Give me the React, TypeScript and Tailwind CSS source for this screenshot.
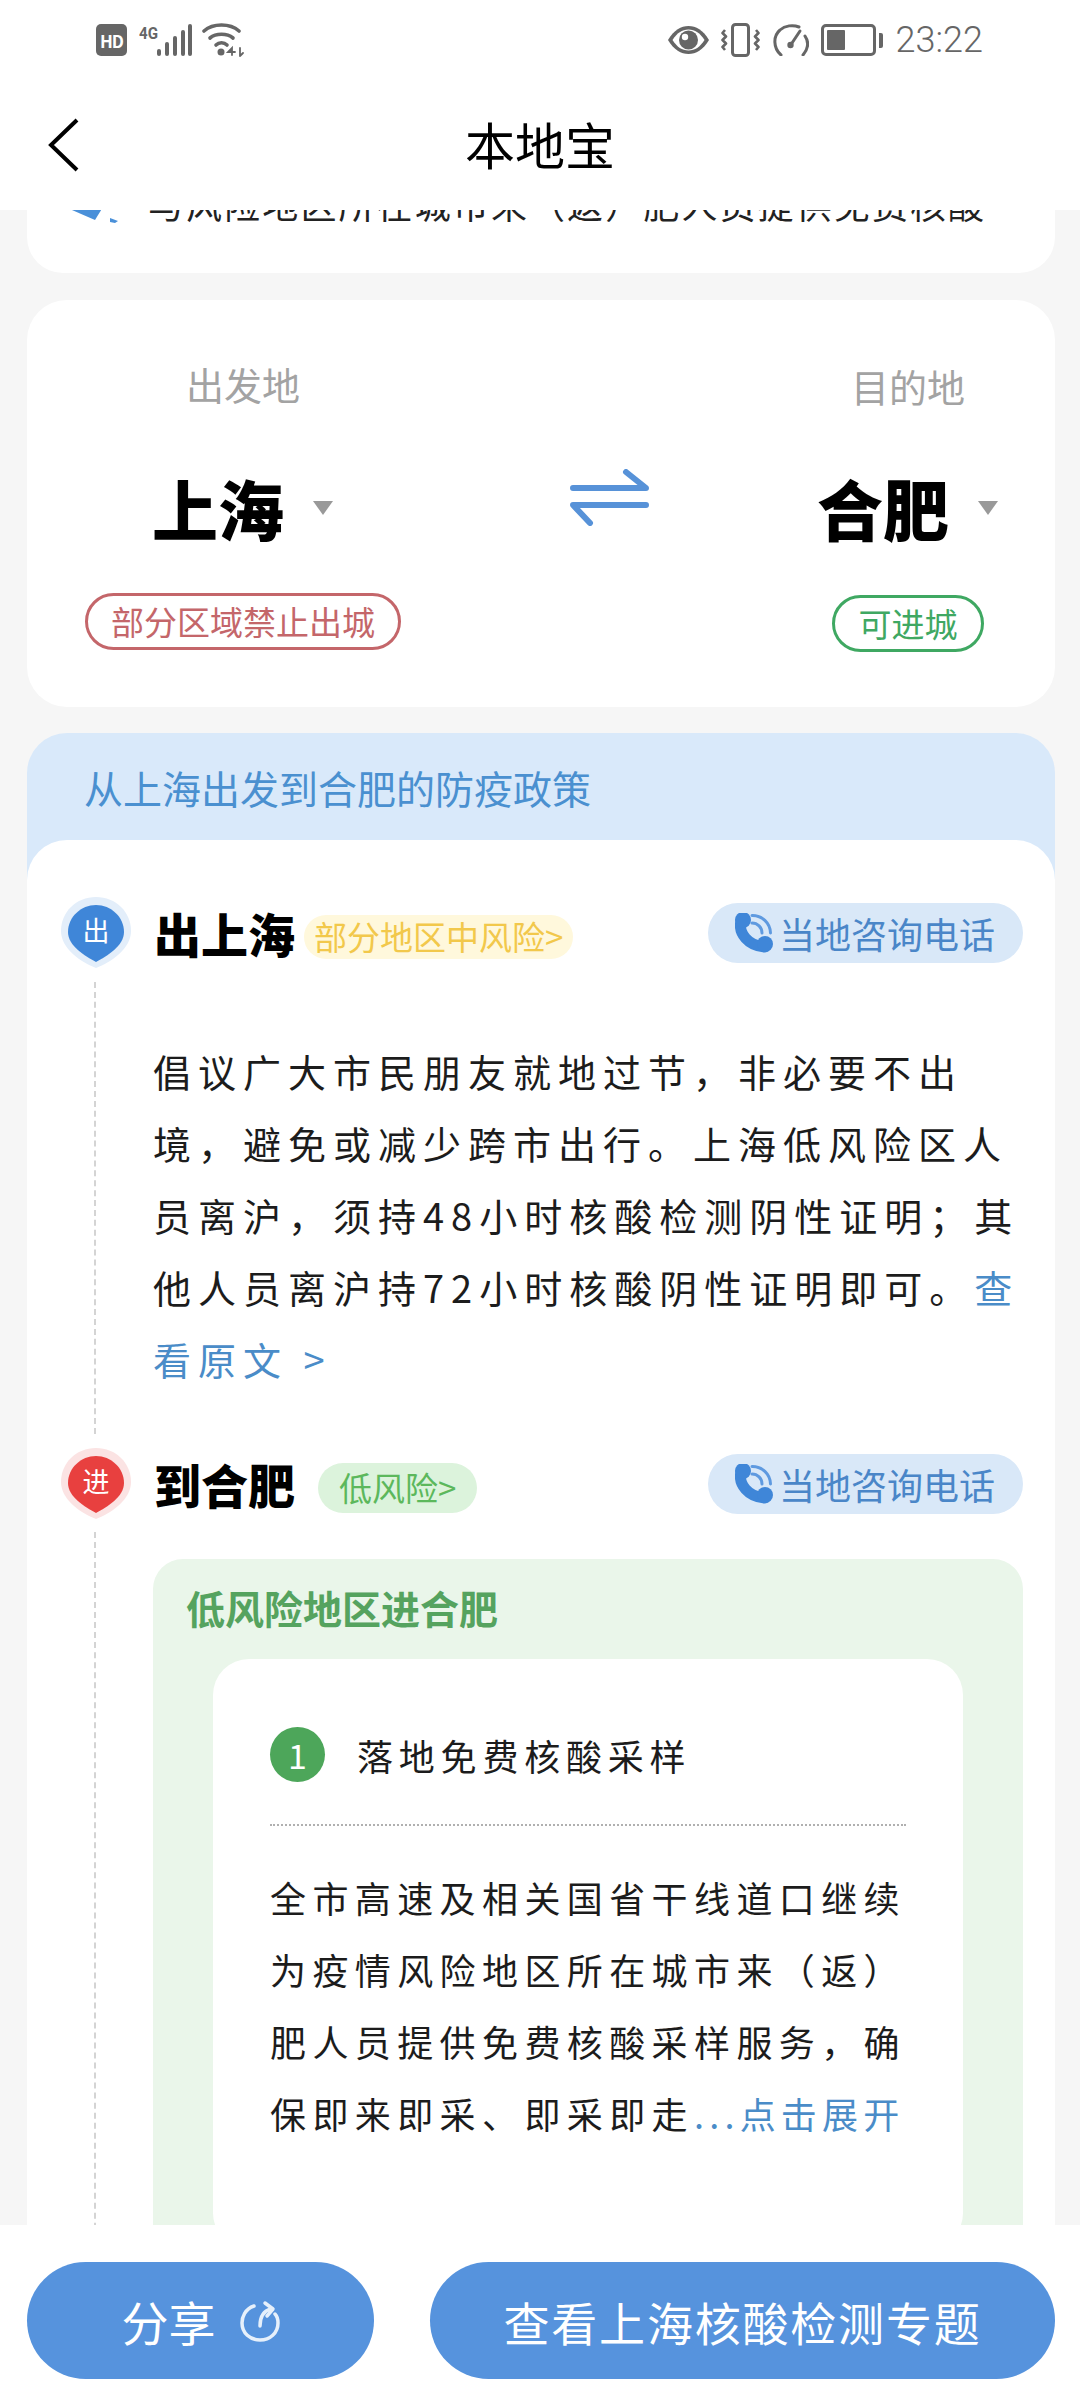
const PhoneIcon = () => (
  <svg width="38" height="40" viewBox="0 0 38 40" fill="none" className="shrink-0">
    <path d="M6 8 C3 20 13 33 30 34" stroke="#3f86d8" strokeWidth="11" strokeLinecap="round" />
    <circle cx="8" cy="7" r="8" fill="#3f86d8" />
    <circle cx="30" cy="31" r="8" fill="#3f86d8" />
    <path d="M17 2.5 A18 18 0 0 1 35.5 20" stroke="#5f9ae0" strokeWidth="3" strokeLinecap="round" />
    <path d="M17 10 A10 10 0 0 1 27 20" stroke="#5f9ae0" strokeWidth="3" strokeLinecap="round" />
  </svg>
);

function Pin({ label, color, halo }: { label: string; color: string; halo: string }) {
  return (
    <div className="relative h-[71px] w-[70px] shrink-0">
      <svg width="70" height="71" viewBox="0 0 70 71">
        <path d="M35 0 C55 0 70 15 70 34 C70 52 50 65 35 71 C20 65 0 52 0 34 C0 15 15 0 35 0Z" fill={halo} />
        <path d="M35 8 C50 8 63 20 63 35 C63 49 46 59 35 65 C24 59 7 49 7 35 C7 20 20 8 35 8Z" fill={color} />
      </svg>
      <span className="absolute inset-x-0 top-[16px] text-center text-[27px] leading-[34px] text-white">{label}</span>
    </div>
  );
}

const PhonePill = () => (
  <div className="ml-auto flex h-[60px] w-[315px] shrink-0 items-center gap-[6px] rounded-full bg-[#d9e8f8] pl-[27px] text-[36px] leading-none text-[#4a86c8]">
    <PhoneIcon />
    <span className="whitespace-nowrap">当地咨询电话</span>
  </div>
);

function Triangle() {
  return (
    <svg width="22" height="15" viewBox="0 0 22 15" className="shrink-0">
      <path d="M1 1 H21 L11 15Z" fill="#999999" />
    </svg>
  );
}

function StatusBar() {
  return (
    <div className="flex h-[80px] items-center justify-between pl-[96px] pr-[97px]">
      <div className="flex items-center">
        <div className="flex h-[32px] w-[31px] items-center justify-center rounded-[5px] bg-[#666666] text-[17px] font-bold leading-none tracking-[-1px] text-white">
          HD
        </div>
        <svg width="53" height="34" viewBox="0 0 53 34" className="ml-[12px]" fill="#666666">
          <text x="0" y="16" fontSize="16" fontWeight="700" textLength="19" lengthAdjust="spacingAndGlyphs" fontFamily="Roboto, sans-serif">
            4G
          </text>
          <rect x="18" y="26" width="4" height="7" rx="2" />
          <rect x="26" y="19" width="4" height="14" rx="2" />
          <rect x="34" y="13" width="4" height="20" rx="2" />
          <rect x="42" y="7" width="4" height="26" rx="2" />
          <rect x="49" y="1" width="4" height="32" rx="2" />
        </svg>
        <svg width="42" height="34" viewBox="0 0 42 34" className="ml-[10px]" fill="none" stroke="#666666" strokeWidth="3.6" strokeLinecap="round">
          <path d="M2 8 C11 0 28 0 37 8" />
          <path d="M8 15 C14 10 25 10 31 15" />
          <path d="M14 22 C17 19 22 19 25 22" />
          <circle cx="19" cy="29" r="3.5" fill="#666666" stroke="none" />
          <path d="M30 32 V25 L26 29 H33 M38 25 V33 M38 33 L41 30" strokeWidth="1.8" />
        </svg>
      </div>
      <div className="flex items-center text-[#666666]">
        <svg width="41" height="28" viewBox="0 0 41 28">
          <path d="M0 14 C6 4 13 0 20.5 0 C28 0 35 4 41 14 C35 24 28 28 20.5 28 C13 28 6 24 0 14Z" fill="#666666" />
          <path d="M4.5 14 C9 7 14 3.5 20.5 3.5 C27 3.5 32 7 36.5 14 C32 21 27 24.5 20.5 24.5 C14 24.5 9 21 4.5 14Z" fill="#ffffff" />
          <circle cx="20.5" cy="14" r="9.5" fill="#666666" />
          <circle cx="17" cy="11" r="3.2" fill="#ffffff" />
        </svg>
        <svg width="39" height="34" viewBox="0 0 39 34" className="ml-[12px]" fill="none" stroke="#666666" strokeWidth="2.6">
          <rect x="11.5" y="1.5" width="16" height="31" rx="3" strokeWidth="3" />
          <path d="M4 7 L1.5 10 L5 13.5 L1.5 17 L5 20.5 L1.5 24 L4 27" strokeLinejoin="round" />
          <path d="M35 7 L37.5 10 L34 13.5 L37.5 17 L34 20.5 L37.5 24 L35 27" strokeLinejoin="round" />
        </svg>
        <svg width="36" height="32" viewBox="0 0 36 32" className="ml-[13px]" fill="none" stroke="#666666" strokeWidth="3">
          <path d="M8 31 C0 24 0 12 7 6 C12 1.5 20 0.5 26 3" strokeLinecap="round" />
          <path d="M32 12 C36 18 35 25 30 31" strokeLinecap="round" />
          <path d="M27 7 L19 19" strokeWidth="3" strokeLinecap="round" />
          <circle cx="17.5" cy="21" r="3.2" fill="#666666" stroke="none" />
        </svg>
        <div className="ml-[12px] flex h-[32px] w-[55px] rounded-[5px] border-[3px] border-[#666666] p-[3px]">
          <div className="w-[18px] rounded-[1px] bg-[#666666]" />
        </div>
        <div className="ml-[3px] h-[15px] w-[4px] rounded-r-[2px] bg-[#666666]" />
        <span className="ml-[13px] font-['Roboto',sans-serif] text-[36px] font-light leading-none">23:22</span>
      </div>
    </div>
  );
}

function RouteCard() {
  return (
    <div className="mt-[27px] flex h-[407px] shrink-0 justify-between rounded-[40px] bg-white pl-[58px] pr-[56px] pt-[59px]">
      <div className="flex w-[316px] flex-col items-center">
        <span className="text-[38px] leading-[50px] text-[#a3a3a3]">出发地</span>
        <div className="mt-[58px] flex h-[80px] items-center gap-[28px]">
          <span className="whitespace-nowrap text-[66px] font-black leading-[80px] text-black">上海</span>
          <Triangle />
        </div>
        <div className="mt-[46px] flex h-[57px] w-full items-center justify-center rounded-full border-[3px] border-[#c4666a] text-[33px] leading-none text-[#c4666a]">
          部分区域禁止出城
        </div>
      </div>
      <svg width="79" height="57" viewBox="0 0 79 57" className="mt-[110px] shrink-0" fill="none" stroke="#5792d8" strokeWidth="6" strokeLinecap="round" strokeLinejoin="round">
        <path d="M3 19 H76 L56 3" />
        <path d="M76 36 H3 L20 54" />
      </svg>
      <div className="flex w-[182px] flex-col items-center">
        <span className="mt-[2px] text-[38px] leading-[50px] text-[#a3a3a3]">目的地</span>
        <div className="mt-[56px] flex h-[80px] items-center gap-[28px]">
          <span className="whitespace-nowrap text-[66px] font-black leading-[80px] text-black">合肥</span>
          <Triangle />
        </div>
        <div className="mt-[48px] flex h-[57px] w-[152px] items-center justify-center rounded-full border-[3px] border-[#3fa862] text-[33px] leading-none text-[#3fa862]">
          可进城
        </div>
      </div>
    </div>
  );
}

function SectionHead({ pin, title, children }: { pin: React.ReactNode; title: string; children: React.ReactNode }) {
  return (
    <div className="flex items-center pl-[34px] pr-[32px]">
      {pin}
      <span className="ml-[23px] text-[47px] font-black leading-none text-black">{title}</span>
      {children}
      <PhonePill />
    </div>
  );
}

export default function App() {
  return (
    <div className="flex h-[2400px] w-[1080px] flex-col overflow-hidden bg-[#f6f6f6] font-['Noto_Sans_CJK_SC',sans-serif]">
      <header className="h-[210px] shrink-0 bg-white">
        <StatusBar />
        <div className="grid h-[130px] grid-cols-[1fr_auto_1fr] items-center">
          <svg width="32" height="54" viewBox="0 0 32 54" className="ml-[48px]" fill="none" stroke="#000000" strokeWidth="4">
            <path d="M29 2 L3 27 L29 52" />
          </svg>
          <span className="-mt-[5px] text-[50px] leading-none text-black">本地宝</span>
        </div>
      </header>

      <main className="flex min-h-0 flex-1 flex-col overflow-hidden pl-[27px] pr-[25px]">
        <div className="h-[63px] shrink-0 overflow-hidden rounded-b-[36px] bg-white">
          <div className="-mt-[25px] flex h-[36px] items-center pl-[38px]">
            <svg width="53" height="36" viewBox="0 0 53 36" className="shrink-0 translate-y-[2px]" fill="#4a90d9">
              <path d="M0 20 H38 L30 33Z" />
              <path d="M45 31 L53 34 L50 36 L45 35Z" />
            </svg>
            <span className="ml-[30px] whitespace-nowrap text-[36px] leading-none tracking-[2.1px] text-[#222222]">
              与风险地区所在城市来（返）肥人员提供免费核酸
            </span>
          </div>
        </div>

        <RouteCard />

        <section className="mt-[26px] flex min-h-0 flex-1 flex-col rounded-t-[40px] bg-[#d9e9fa]">
          <div className="flex h-[107px] shrink-0 items-center pl-[57px] pt-[1px] text-[39px] leading-none text-[#4a90d0]">
            从上海出发到合肥的防疫政策
          </div>
          <div className="min-h-0 flex-1 overflow-hidden rounded-t-[40px] bg-white pt-[57px]">
            <SectionHead pin={<Pin label="出" color="#3f86d8" halo="#e3eefa" />} title="出上海">
              <span className="ml-[9px] mt-[8px] flex h-[44px] items-center rounded-full bg-[#fff8dc] px-[10px] text-[33px] leading-none text-[#f2c84b]">
                部分地区中风险&gt;
              </span>
            </SectionHead>
            <div className="ml-[67px] mt-[14px] flex border-l-2 border-dashed border-[#d4d4d4] pb-[39px] pl-[57px] pr-[32px] pt-[53px]">
              <p className="text-[38px] leading-[72px] tracking-[7px] text-[#1c1c1c]">
                倡议广大市民朋友就地过节，非必要不出境，避免或减少跨市出行。上海低风险区人员离沪，须持48小时核酸检测阴性证明；其他人员离沪持72小时核酸阴性证明即可。
                <span className="text-[#4a8cc8]">查看原文 &gt;</span>
              </p>
            </div>
            <div className="mt-[14px]">
              <SectionHead pin={<Pin label="进" color="#e8403f" halo="#fbe3e3" />} title="到合肥">
                <span className="ml-[23px] mt-[8px] flex h-[50px] items-center rounded-full bg-[#dcf3dc] px-[21px] text-[33px] leading-none text-[#5cb85c]">
                  低风险&gt;
                </span>
              </SectionHead>
            </div>
            <div className="ml-[67px] mt-[13px] flex border-l-2 border-dashed border-[#d4d4d4] pl-[57px] pr-[32px] pt-[27px]">
              <div className="w-[870px] rounded-t-[30px] bg-[#eaf6ea] px-[60px] pb-[200px] pt-[24px]">
                <h3 className="-ml-[27px] whitespace-nowrap text-[39px] font-bold leading-[48px] text-[#55a35f]">低风险地区进合肥</h3>
                <div className="mt-[28px] rounded-[36px] bg-white pb-[100px] pl-[57px] pr-[40px] pt-[68px]">
                  <div className="flex items-center gap-[32px]">
                    <span className="flex h-[55px] w-[55px] shrink-0 items-center justify-center rounded-full bg-[#4da65a] text-[34px] leading-none text-white">1</span>
                    <span className="text-[36px] leading-none tracking-[5.8px] text-[#1c1c1c]">落地免费核酸采样</span>
                  </div>
                  <div className="mr-[17px] mt-[42px] border-t-2 border-dotted border-[#b0b0b0]" />
                  <p className="mt-[35px] text-[36px] leading-[72px] tracking-[6.4px] text-[#1c1c1c]">
                    全市高速及相关国省干线道口继续为疫情风险地区所在城市来（返）肥人员提供免费核酸采样服务，确保即来即采、即采即走
                    <span className="tracking-[5.2px] text-[#4a8cc8]">...点击展开</span>
                  </p>
                </div>
              </div>
            </div>
          </div>
        </section>
      </main>

      <footer className="flex h-[175px] shrink-0 gap-[56px] bg-white pl-[27px] pr-[25px] pt-[37px]">
        <button type="button" className="flex h-[117px] w-[347px] items-center justify-center gap-[24px] rounded-full bg-[#5693dd] text-[47px] leading-none text-white">
          <span>分享</span>
          <svg width="40" height="42" viewBox="0 0 40 42" fill="none" stroke="#e6f0fb" strokeWidth="3.5" strokeLinecap="round">
            <path d="M14 6 C5 9 2 17 2 23 C2 33 10 40 20 40 C30 40 38 33 38 23 C38 19 37 16 35 14" />
            <path d="M20 26 C20 17 23 11 31 9" />
            <path d="M25 3 L33 9 L27 16" strokeLinejoin="round" />
          </svg>
        </button>
        <button type="button" className="flex h-[117px] flex-1 items-center justify-center rounded-full bg-[#5693dd] text-[46px] leading-none tracking-[1.8px] text-white">
          查看上海核酸检测专题
        </button>
      </footer>
    </div>
  );
}
